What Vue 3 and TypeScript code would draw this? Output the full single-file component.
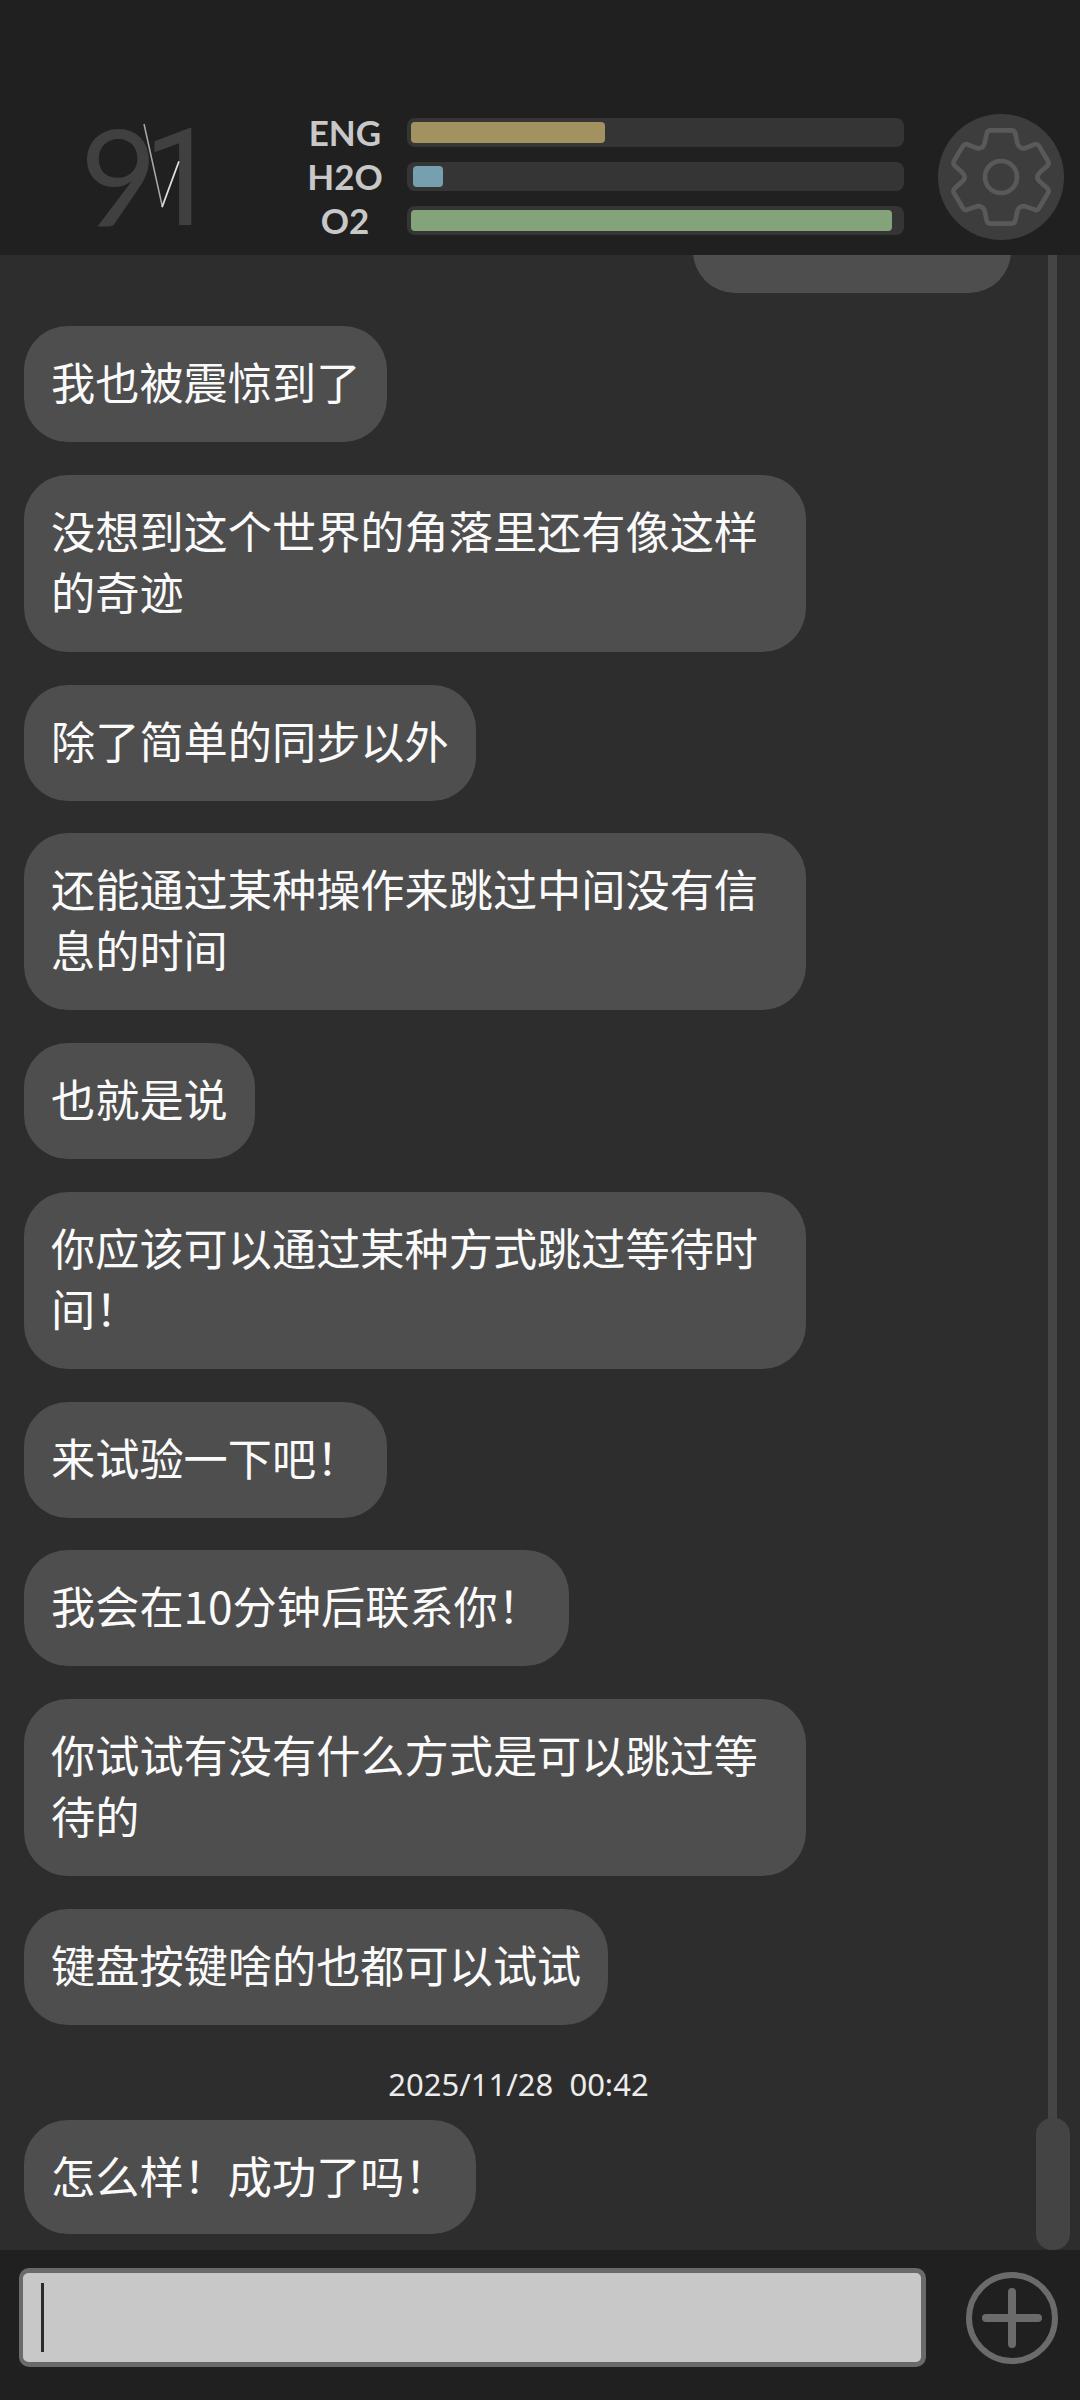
<script setup lang="ts">
interface Meter { label: string; color: string; width: number; inset: number }
const meters: Meter[] = [
  { label: 'ENG', color: '#a2925f', width: 193.5, inset: 4 },
  { label: 'H2O', color: '#76a0b0', width: 29.5, inset: 6 },
  { label: 'O2', color: '#85a37b', width: 481, inset: 4 },
]
const messages: string[] = [
  '我也被震惊到了',
  '没想到这个世界的角落里还有像这样的奇迹',
  '除了简单的同步以外',
  '还能通过某种操作来跳过中间没有信息的时间',
  '也就是说',
  '你应该可以通过某种方式跳过等待时间！',
  '来试验一下吧！',
  '我会在10分钟后联系你！',
  '你试试有没有什么方式是可以跳过等待的',
  '键盘按键啥的也都可以试试',
]
</script>

<template>
  <div class="app">
    <header class="header">
      <div class="logo">
        <span class="logo-nine">9</span>
        <span class="logo-one">1</span>
        <svg class="logo-tick" viewBox="0 0 60 100" width="60" height="100" fill="none">
          <path d="M4 2 L22.300 84.500" stroke="#a8a8a8" stroke-width="1.500" />
          <path d="M22.300 84.500 L38.700 40" stroke="#e0e0e0" stroke-width="1.800" stroke-linecap="round" />
        </svg>
      </div>
      <div class="meters">
        <div v-for="m in meters" :key="m.label" class="meter">
          <span class="meter-label">{{ m.label }}</span>
          <div class="track">
            <div class="fill" :style="{ width: m.width + 'px', background: m.color, marginLeft: m.inset + 'px' }"></div>
          </div>
        </div>
      </div>
      <div class="gear">
        <svg viewBox="63 80 300 300" width="100" height="100" fill="none" stroke="#595959" stroke-width="14" stroke-linejoin="round">
          <path d="M182 90 L244 90 Q254 90 256 100 L262 128 Q264 136 270 140 L272 142 Q278 146 286 143 L314 132 Q322 130 328 138 L354 182 Q358 190 352 196 L330 216 Q322 224 322 230 Q322 238 330 244 L352 264 Q358 270 354 278 L328 322 Q322 332 314 328 L286 318 Q278 316 272 320 L268 322 Q264 325 262 332 L256 360 Q254 370 244 370 L182 370 Q172 370 170 360 L164 332 Q162 325 158 322 L154 320 Q148 316 140 318 L112 328 Q104 332 98 322 L72 278 Q68 270 74 264 L96 244 Q104 238 104 230 Q104 224 96 216 L74 196 Q68 190 72 182 L98 138 Q104 130 112 132 L140 143 Q148 146 154 142 L158 140 Q162 136 164 128 L170 100 Q172 90 182 90 Z" />
          <circle cx="213" cy="230" r="48" />
        </svg>
      </div>
    </header>

    <main class="chat">
      <div class="clipped"></div>
      <div class="list">
        <div v-for="(text, i) in messages" :key="i" class="bubble">{{ text }}</div>
        <div class="stamp">2025/11/28&nbsp;&nbsp;00:42</div>
        <div class="bubble bubble-last">怎么样！成功了吗！</div>
      </div>
      <div class="scroll-rail"></div>
      <div class="scroll-thumb"></div>
    </main>

    <footer class="footer">
      <div class="input"><span class="caret"></span></div>
      <svg class="plus" viewBox="0 0 92 92" width="92" height="92" fill="none" stroke="#6b6b6b">
        <circle cx="46" cy="46" r="43" stroke-width="6" />
        <path d="M46 20v52M20 46h52" stroke-width="8" stroke-linecap="round" />
      </svg>
    </footer>
  </div>
</template>

<style>
html, body { margin: 0; background: #2d2d2d; }
</style>

<style scoped>
.app {
  width: 1080px;
  height: 2400px;
  display: flex;
  flex-direction: column;
  background: #2d2d2d;
  font-family: "Noto Sans CJK SC", "Noto Sans", sans-serif;
  overflow: hidden;
}
.header {
  height: 255px;
  flex: none;
  background: #202020;
  display: flex;
  align-items: flex-start;
  box-sizing: border-box;
  padding-left: 80px;
}
.logo {
  position: relative;
  flex: none;
  width: 215px;
  height: 110px;
  margin-top: 120px;
  display: flex;
  align-items: flex-start;
  color: #404040;
  line-height: 110px;
}
.logo-nine {
  font-family: "Lato", sans-serif;
  font-weight: 400;
  font-size: 133px;
  letter-spacing: -14px;
}
.logo-one {
  font-family: "Roboto", sans-serif;
  font-weight: 400;
  font-size: 135px;
  margin-top: 4px;
}
.logo-tick {
  position: absolute;
  left: 60px;
  top: 2px;
}
.meters {
  flex: none;
  margin-top: 118px;
  display: flex;
  flex-direction: column;
  gap: 15px;
}
.meter { display: flex; align-items: center; height: 29px; }
.meter-label {
  width: 100px;
  flex: none;
  text-align: center;
  font-family: "Lato", sans-serif;
  font-weight: 700;
  font-size: 35px;
  color: #c8c8c8;
  line-height: 29px;
}
.track {
  flex: none;
  margin-left: 12px;
  width: 497px;
  height: 29px;
  border-radius: 8px;
  background: #353535;
  display: flex;
  align-items: center;
}
.fill { height: 21px; border-radius: 4px; }
.gear {
  flex: none;
  margin: 114px 0 0 34px;
  width: 126px;
  height: 126px;
  border-radius: 50%;
  background: #3d3d3d;
  display: flex;
  align-items: center;
  justify-content: center;
}
.chat { position: relative; flex: 1; min-height: 0; overflow: hidden; }
.clipped {
  position: absolute;
  left: 693px;
  top: -60px;
  width: 318px;
  height: 98px;
  border-radius: 42px;
  background: #4e4e4e;
}
.list {
  display: flex;
  flex-direction: column;
  align-items: flex-start;
  gap: 32.75px;
  padding: 71px 0 0 24px;
}
.bubble {
  box-sizing: border-box;
  max-width: 782px;
  padding: 25px 27px 30px;
  border-radius: 44px;
  background: #4e4e4e;
  color: #fafafa;
  font-size: 44.2px;
  line-height: 61px;
}
.bubble-last { padding: 25px 27px 28px; }
.stamp {
  width: 989px;
  text-align: center;
  margin: 5px 0 -17px;
  color: #ececec;
  font-size: 31px;
  line-height: 42px;
  font-family: "Noto Sans", sans-serif;
}
.scroll-rail {
  position: absolute;
  left: 1048px;
  top: 0;
  bottom: 120px;
  width: 9px;
  background: #454545;
}
.scroll-thumb {
  position: absolute;
  left: 1036px;
  bottom: 0;
  width: 34px;
  height: 132px;
  border-radius: 16px;
  background: #444444;
}
.footer {
  flex: none;
  height: 150px;
  background: #202020;
  display: flex;
  align-items: flex-start;
  box-sizing: border-box;
  padding: 18px 0 0 19px;
}
.input {
  box-sizing: border-box;
  flex: none;
  width: 907px;
  height: 99px;
  border-radius: 10px;
  background: #c8c8c8;
  border: 5px solid #6a6a6a;
  border-left-width: 4px;
  display: flex;
  align-items: center;
  padding-left: 18px;
}
.caret { width: 3px; height: 69px; background: #2b2b2b; }
.plus { flex: none; margin: 4px 0 0 40px; }
</style>
